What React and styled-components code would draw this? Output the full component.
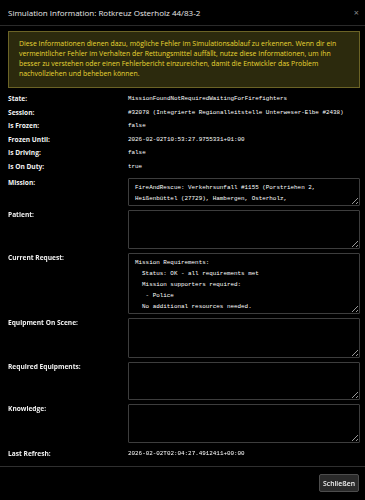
import React from "react";
import styled, { createGlobalStyle } from "styled-components";

// ── Styles ──────────────────────────────────────────────────
const GlobalStyle = createGlobalStyle`
  html, body {
    margin: 0;
    padding: 0;
    background: #000;
  }
  body {
    font-family: "Open Sans", "Noto Sans", sans-serif;
    color-scheme: dark;
  }
  * { box-sizing: border-box; }
`;

const Modal = styled.div`
  width: 365px;
  height: 500px;
  background: #000;
  display: flex;
  flex-direction: column;
`;

const Header = styled.div`
  height: 26px;
  padding: 0 8px;
  display: flex;
  align-items: center;
  justify-content: space-between;
  border-bottom: 1px solid #2a2a2a;
`;

const Title = styled.div`
  font-size: 8px;
  color: #e8e8e8;
  padding-bottom: 1px;
`;

const Close = styled.span`
  font-size: 9px;
  color: #8a8a8a;
  line-height: 1;
  margin-right: -2px;
`;

const Body = styled.div`
  flex: 1;
  padding: 5px 5px 0 8px;
`;

const Alert = styled.div`
  background: #2c2a0d;
  border: 1px solid #6b6326;
  color: #e9d734;
  font-size: 6.9px;
  line-height: 10px;
  padding: 7px 9px 8px 10px;
  margin-bottom: 4px;
`;

const Grid = styled.div`
  display: grid;
  grid-template-columns: 120px 232px;
`;

const Label = styled.div`
  font-size: 6.6px;
  font-weight: 700;
  color: #f2f2f2;
  line-height: ${(p) => (p.$top ? "9px" : "13.6px")};
  margin-top: ${(p) => (p.$top ? "4px" : "0")};
  white-space: nowrap;
`;

const Value = styled.div`
  font-family: "Liberation Mono", "DejaVu Sans Mono", monospace;
  font-size: 5.9px;
  color: #ffffff;
  line-height: 13.6px;
  white-space: nowrap;
`;

const Area = styled.textarea`
  display: block;
  width: 232px;
  height: ${(p) => p.$h}px;
  margin-top: 4px;
  background: #000;
  border: 1px solid #3d3d3d;
  border-radius: 1px;
  color: #ffffff;
  font-family: "Liberation Mono", "DejaVu Sans Mono", monospace;
  font-size: 5.9px;
  line-height: 11px;
  padding: 3px 6px;
  outline: none;
  white-space: pre-wrap;
  overflow-y: auto;

  &::-webkit-scrollbar {
    width: 4px;
  }
  &::-webkit-scrollbar-track {
    background: #000;
  }
  &::-webkit-scrollbar-thumb {
    background: #d8d8d8;
  }
  &::-webkit-scrollbar-corner {
    background: #d8d8d8;
  }
`;

const Footer = styled.div`
  height: 34px;
  border-top: 1px solid #2f2f2f;
  display: flex;
  align-items: flex-start;
  justify-content: flex-end;
  padding: 7px 6px 0 0;
`;

const Button = styled.button`
  height: 18px;
  width: 40px;
  padding: 0;
  background: #2a2a2a;
  border: 1px solid #4d4d4d;
  border-radius: 2px;
  color: #f4f4f4;
  font-family: "Open Sans", "Noto Sans", sans-serif;
  font-size: 6.8px;
  font-weight: 600;
`;

// ── Data ────────────────────────────────────────────────────
const INFO = [
  { label: "State:", value: "MissionFoundNotRequiredWaitingForFirefighters" },
  { label: "Session:", value: "#32078 (Integrierte Regionalleitstelle Unterweser-Elbe #2438)" },
  { label: "Is Frozen:", value: "false" },
  { label: "Frozen Until:", value: "2026-02-02T10:53:27.9755331+01:00" },
  { label: "Is Driving:", value: "false" },
  { label: "Is On Duty:", value: "true" },
];

const AREAS = [
  {
    label: "Mission:",
    h: 28,
    text: "FireAndRescue: Verkehrsunfall #1155 (Porstriehen 2, Heißenbüttel (27729), Hambergen, Osterholz, Niedersachsen/Deutschland)",
  },
  { label: "Patient:", h: 39, text: "" },
  {
    label: "Current Request:",
    h: 61,
    text: "Mission Requirements:\n  Status: OK - all requirements met\n  Mission supporters required:\n   - Police\n  No additional resources needed.",
  },
  { label: "Equipment On Scene:", h: 40, text: "" },
  { label: "Required Equipments:", h: 38, text: "" },
  { label: "Knowledge:", h: 39, text: "" },
];

// ── Component ────────────────────────────────────────────────
export default function App() {
  return (
    <>
      <GlobalStyle />
      <Modal>
        <Header>
          <Title>Simulation Information: Rotkreuz Osterholz 44/83-2</Title>
          <Close>×</Close>
        </Header>
        <Body>
          <Alert>
            Diese Informationen dienen dazu, mögliche Fehler im Simulationsablauf zu erkennen. Wenn dir ein
            vermeintlicher Fehler im Verhalten der Rettungsmittel auffällt, nutze diese Informationen, um ihn
            besser zu verstehen oder einen Fehlerbericht einzureichen, damit die Entwickler das Problem
            nachvollziehen und beheben können.
          </Alert>
          <Grid>
            {INFO.map(({ label, value }) => (
              <React.Fragment key={label}>
                <Label>{label}</Label>
                <Value>{value}</Value>
              </React.Fragment>
            ))}
            {AREAS.map(({ label, h, text }) => (
              <React.Fragment key={label}>
                <Label $top>{label}</Label>
                <Area $h={h} readOnly defaultValue={text} />
              </React.Fragment>
            ))}
            <Label style={{ marginTop: 4 }}>Last Refresh:</Label>
            <Value style={{ marginTop: 4 }}>2026-02-02T02:04:27.4912411+00:00</Value>
          </Grid>
        </Body>
        <Footer>
          <Button>Schließen</Button>
        </Footer>
      </Modal>
    </>
  );
}
